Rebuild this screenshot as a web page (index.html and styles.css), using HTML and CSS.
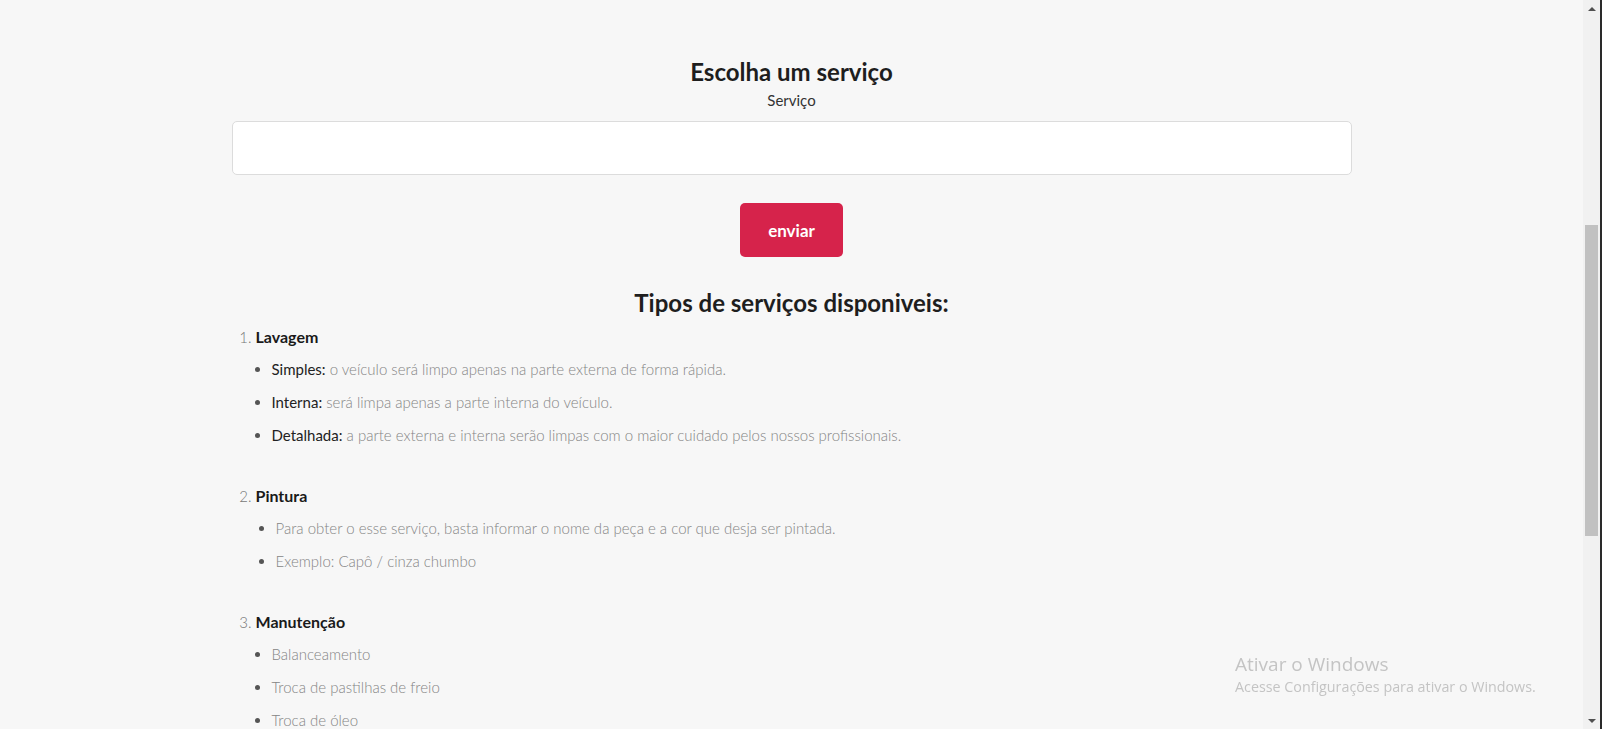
FILE: index.html
```html
<!DOCTYPE html>
<html lang="pt-BR">
<head>
<meta charset="utf-8">
<title>Escolha um serviço</title>
<link rel="stylesheet" href="styles.css">
</head>
<body>
<div class="window">
  <main class="page">
    <div class="container">
      <h1 class="title">Escolha um serviço</h1>
      <form class="form">
        <label class="label" for="servico">Serviço</label>
        <input class="input" id="servico" type="text">
        <button class="btn" type="button">enviar</button>
      </form>
      <h2 class="subtitle">Tipos de serviços disponiveis:</h2>
      <ol class="services">
        <li class="service">
          <strong class="service-name">Lavagem</strong>
          <ul class="details">
            <li class="detail"><span class="key">Simples:</span> o veículo será limpo apenas na parte externa de forma rápida.</li>
            <li class="detail"><span class="key">Interna:</span> será limpa apenas a parte interna do veículo.</li>
            <li class="detail"><span class="key">Detalhada:</span> a parte externa e interna serão limpas com o maior cuidado pelos nossos profissionais.</li>
          </ul>
        </li>
        <li class="service">
          <strong class="service-name">Pintura</strong>
          <ul class="details details-shift">
            <li class="detail">Para obter o esse serviço, basta informar o nome da peça e a cor que desja ser pintada.</li>
            <li class="detail">Exemplo: Capô / cinza chumbo</li>
          </ul>
        </li>
        <li class="service">
          <strong class="service-name">Manutenção</strong>
          <ul class="details">
            <li class="detail">Balanceamento</li>
            <li class="detail">Troca de pastilhas de freio</li>
            <li class="detail">Troca de óleo</li>
          </ul>
        </li>
      </ol>
    </div>
  </main>
  <div class="scrollbar">
    <div class="arrow arrow-up"></div>
    <div class="track"><div class="thumb"></div></div>
    <div class="arrow arrow-down"></div>
  </div>
  <div class="edge"></div>
</div>
<div class="watermark">
  <div class="wm-title">Ativar o Windows</div>
  <div class="wm-text">Acesse Configurações para ativar o Windows.</div>
</div>
</body>
</html>
```
FILE: styles.css
```css
html, body {
  margin: 0;
  padding: 0;
  height: 729px;
  overflow: hidden;
}
body {
  background: #f7f7f7;
  font-family: Lato, "Open Sans", sans-serif;
  color: #222;
}
.window {
  display: flex;
  height: 729px;
}
.page {
  flex: 1;
  overflow: hidden;
}
.container {
  width: 1120px;
  margin: 0 auto;
  padding-top: 57px;
}
.title {
  margin: 0;
  font-size: 24px;
  line-height: 30px;
  font-weight: 700;
  text-align: center;
  color: #1e1e1e;
}
.form {
  display: flex;
  flex-direction: column;
  align-items: center;
}
.label {
  margin-top: 3px;
  font-size: 15px;
  line-height: 20px;
  color: #333;
}
.input {
  box-sizing: border-box;
  width: 100%;
  height: 54px;
  margin-top: 11px;
  border: 1px solid #dcdcdc;
  border-radius: 5px;
  background: #fff;
}
.btn {
  margin-top: 28px;
  width: 103px;
  height: 54px;
  border: 0;
  border-radius: 5px;
  background: #d6234b;
  color: #fff;
  font-family: inherit;
  font-size: 17px;
  font-weight: 700;
}
.subtitle {
  margin: 31px 0 0;
  font-size: 24px;
  line-height: 30px;
  font-weight: 700;
  text-align: center;
  color: #1e1e1e;
}
.services {
  margin: 9px 0 0;
  padding-left: 24px;
  color: #777;
  font-size: 15px;
  font-weight: 300;
}
.service {
  margin-bottom: 34px;
}
.service::marker {
  color: #777;
}
.service-name {
  display: block;
  line-height: 20px;
  font-size: 16px;
  font-weight: 700;
  color: #1a1a1a;
}
.details {
  margin: 6px 0 0;
  padding-left: 16px;
  list-style: disc;
}
.details-shift {
  padding-left: 20px;
}
.detail {
  line-height: 33px;
  font-size: 15px;
  font-weight: 300;
  color: #858585;
}
.detail::marker {
  color: #555;
}
.key {
  font-weight: 400;
  color: #222;
}
.scrollbar {
  width: 17px;
  background: #f1f1f1;
  display: flex;
  flex-direction: column;
}
.arrow {
  height: 17px;
  display: flex;
  align-items: center;
  justify-content: center;
}
.arrow-up::before {
  content: "";
  border-left: 4px solid transparent;
  border-right: 4px solid transparent;
  border-bottom: 4px solid #505050;
}
.arrow-down::before {
  content: "";
  border-left: 4px solid transparent;
  border-right: 4px solid transparent;
  border-top: 4px solid #505050;
}
.track {
  flex: 1;
  padding-top: 208px;
}
.thumb {
  margin: 0 2px;
  height: 311px;
  background: #c1c1c1;
}
.edge {
  width: 2px;
  background: #2a2a2a;
}
.watermark {
  position: fixed;
  left: 1235px;
  top: 651px;
  color: #c4c4c4;
  font-family: "Open Sans", "Noto Sans", sans-serif;
}
.wm-title {
  font-size: 19px;
  line-height: 26px;
}
.wm-text {
  font-size: 14.3px;
  line-height: 20px;
}
```
